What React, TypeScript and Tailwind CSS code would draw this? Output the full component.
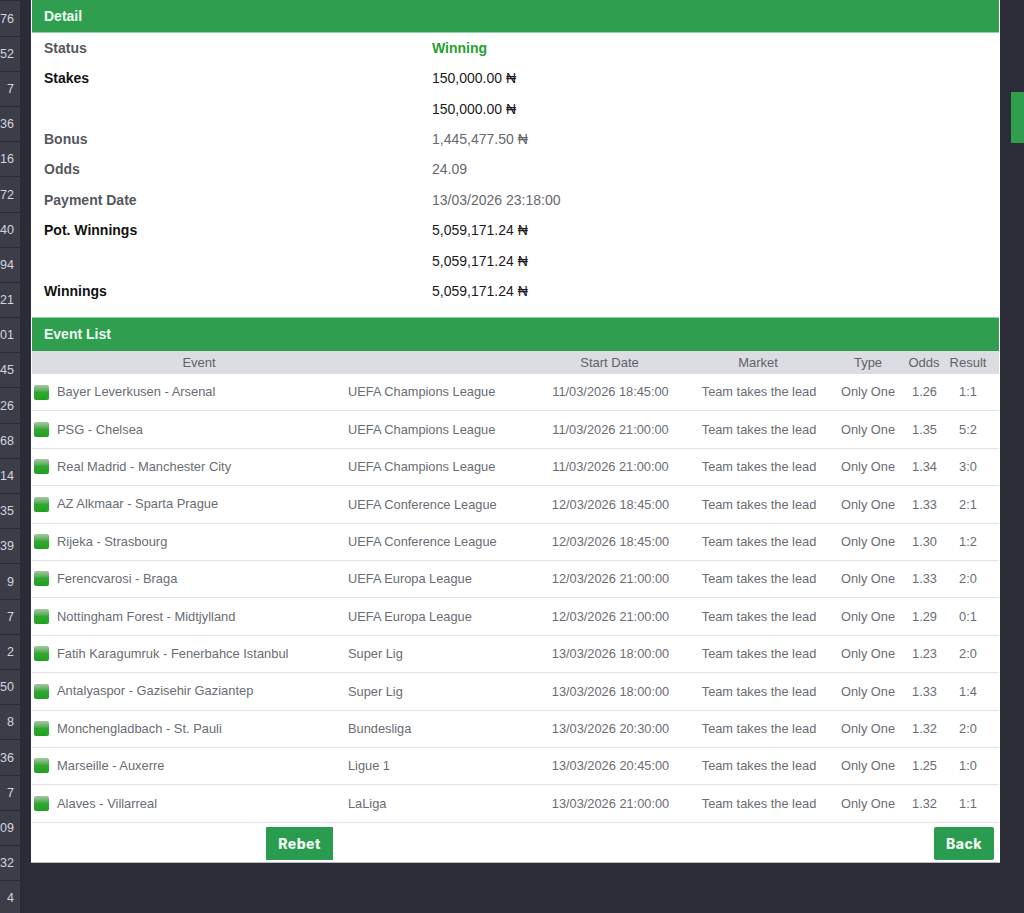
const sideNumbers = ["76", "52", "7", "36", "16", "72", "40", "94", "21", "01", "45", "26", "68", "14", "35", "39", "9", "7", "2", "50", "8", "36", "7", "09", "32", "4"];

const details = [
  { label: "Status", value: "Winning", tone: "status" },
  { label: "Stakes", value: "150,000.00 ₦", tone: "dark" },
  { label: "", value: "150,000.00 ₦", tone: "dark" },
  { label: "Bonus", value: "1,445,477.50 ₦", tone: "muted" },
  { label: "Odds", value: "24.09", tone: "muted" },
  { label: "Payment Date", value: "13/03/2026 23:18:00", tone: "muted" },
  { label: "Pot. Winnings", value: "5,059,171.24 ₦", tone: "dark" },
  { label: "", value: "5,059,171.24 ₦", tone: "dark" },
  { label: "Winnings", value: "5,059,171.24 ₦", tone: "dark" },
];

const events = [
  ["Bayer Leverkusen - Arsenal", "UEFA Champions League", "11/03/2026 18:45:00", "1.26", "1:1"],
  ["PSG - Chelsea", "UEFA Champions League", "11/03/2026 21:00:00", "1.35", "5:2"],
  ["Real Madrid - Manchester City", "UEFA Champions League", "11/03/2026 21:00:00", "1.34", "3:0"],
  ["AZ Alkmaar - Sparta Prague", "UEFA Conference League", "12/03/2026 18:45:00", "1.33", "2:1"],
  ["Rijeka - Strasbourg", "UEFA Conference League", "12/03/2026 18:45:00", "1.30", "1:2"],
  ["Ferencvarosi - Braga", "UEFA Europa League", "12/03/2026 21:00:00", "1.33", "2:0"],
  ["Nottingham Forest - Midtjylland", "UEFA Europa League", "12/03/2026 21:00:00", "1.29", "0:1"],
  ["Fatih Karagumruk - Fenerbahce Istanbul", "Super Lig", "13/03/2026 18:00:00", "1.23", "2:0"],
  ["Antalyaspor - Gazisehir Gaziantep", "Super Lig", "13/03/2026 18:00:00", "1.33", "1:4"],
  ["Monchengladbach - St. Pauli", "Bundesliga", "13/03/2026 20:30:00", "1.32", "2:0"],
  ["Marseille - Auxerre", "Ligue 1", "13/03/2026 20:45:00", "1.25", "1:0"],
  ["Alaves - Villarreal", "LaLiga", "13/03/2026 21:00:00", "1.32", "1:1"],
];

const columns = "grid grid-cols-[21px_292px_188px_153px_144px_76px_36px_57px]";

function WinDot() {
  return (
    <span className="block w-[15px] h-[15px] rounded-[2px] bg-gradient-to-b from-[#a8c4a8] via-[#2fa82f] to-[#22a022]" />
  );
}

export default function App() {
  return (
    <div className="flex h-[913px] overflow-hidden bg-[#2a2d36] font-['Liberation_Sans',Arial,sans-serif]">
      <div className="w-5 shrink-0 pt-[1.4px]">
        {sideNumbers.map((n, i) => (
          <div
            key={i}
            className="h-[35.2px] flex items-center justify-end pr-[6px] pt-[1px] bg-[#3b3e49] border-b border-[#2a2d36] text-[12.5px] text-[#d3d5da]"
          >
            {n}
          </div>
        ))}
      </div>

      <div className="ml-[11px] w-[969px] h-[863px] shrink-0 px-px bg-white border-b border-[#b9bbc0]">
        <div className="h-[33px] flex items-center pl-3 bg-[#2f9e4f] border-b border-[#8fd6a3] text-[14px] font-bold text-[#eefaf1]">
          Detail
        </div>
        <div className="h-[284px] pt-[0.2px]">
          {details.map((d, i) => {
            const strong = d.tone === "dark";
            return (
              <div key={i} className="h-[30.4px] flex items-center pl-3 text-[14px]">
                <div className={`w-[388px] font-bold ${strong ? "text-[#111111]" : "text-[#55575f]"}`}>{d.label}</div>
                <div
                  className={
                    d.tone === "status"
                      ? "font-bold text-[#1fa22e]"
                      : strong
                        ? "text-[#1b1b1f]"
                        : "text-[#66686f]"
                  }
                >
                  {d.value}
                </div>
              </div>
            );
          })}
        </div>

        <div className="h-[34px] flex items-center pl-3 bg-[#2f9e4f] border-t border-[#8fd6a3] text-[14px] font-bold text-[#eefaf1]">
          Event List
        </div>
        <div className={`${columns} h-[23px] items-center bg-[#dcdde2] text-[13px] text-[#5f6169] text-center`}>
          <span />
          <span>Event</span>
          <span />
          <span>Start Date</span>
          <span>Market</span>
          <span>Type</span>
          <span>Odds</span>
          <span className="pr-[5px]">Result</span>
        </div>

        {events.map((e) => (
          <div
            key={e[0]}
            className={`${columns} h-[37.4px] items-center pb-[0.4px] border-b border-[#e2e3e6] text-[12.8px] text-[#6a6c74]`}
          >
            <span className="pl-0.5">
              <WinDot />
            </span>
            <span className="pl-1 whitespace-nowrap text-[12.9px]">{e[0]}</span>
            <span className="pl-[3px] whitespace-nowrap">{e[1]}</span>
            <span className="pl-[2px] text-center whitespace-nowrap">{e[2]}</span>
            <span className="pl-[2px] text-center whitespace-nowrap">Team takes the lead</span>
            <span className="text-center whitespace-nowrap">Only One</span>
            <span className="pl-[1px] text-center">{e[3]}</span>
            <span className="text-center pr-[5px]">{e[4]}</span>
          </div>
        ))}

        <div className="flex justify-between pl-[234px] pr-[5px] pt-[4px]">
          <button className="w-[67px] h-[33px] bg-[#2a9c50] text-[14px] font-extrabold tracking-[0.5px] text-[#f0f6f2] font-['Inter',sans-serif]">
            Rebet
          </button>
          <button className="w-[60px] h-[33px] rounded-[2px] bg-[#2a9c50] text-[14px] font-extrabold tracking-[0.5px] text-[#f0f6f2] font-['Inter',sans-serif]">
            Back
          </button>
        </div>
      </div>

      <div className="flex-1 flex justify-end pt-[92px]">
        <div className="w-[13px] h-[51px] bg-[#2f9e4f]" />
      </div>
    </div>
  );
}
